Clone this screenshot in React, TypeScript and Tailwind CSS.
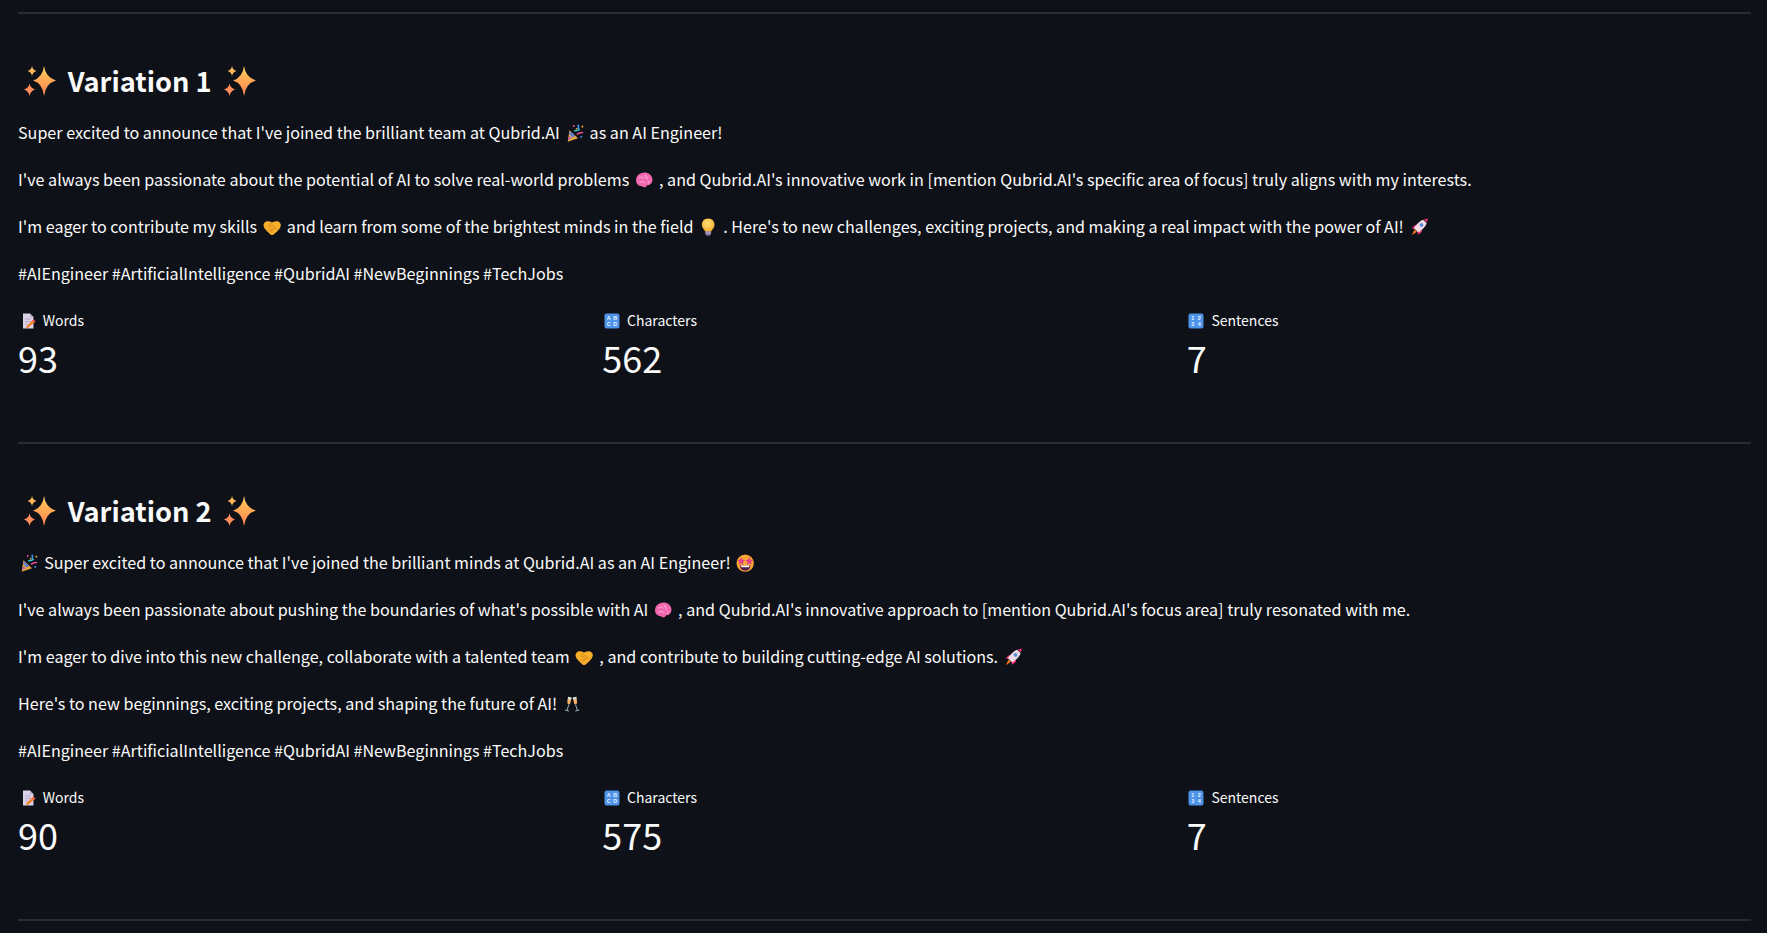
import React from 'react';

// the page uses a different emoji set than the installed one, so they are drawn here
const glyphs: Record<string, React.ReactNode> = {
  sparkles: (
    <>
      <defs>
        <linearGradient id="spark" x1="0" y1="0" x2="0" y2="1">
          <stop offset="0" stopColor="#ffcf5c" />
          <stop offset="1" stopColor="#ff7f50" />
        </linearGradient>
      </defs>
      <path fill="url(#spark)" d="M20 1Q21.5 12.500 32 15.500Q21.500 18.500 20 31Q18.500 18.500 9 15.500Q18.500 12.500 20 1Z" />
      <path fill="#ffb957" d="M8 1Q8.700 5 12.500 6Q8.700 7 8 11Q7.300 7 3.500 6Q7.300 5 8 1Z" />
      <path fill="#ff8d5a" d="M5.500 18.500Q6.300 23 11 24.500Q6.300 26 5.500 31Q4.700 26 0 24.500Q4.700 23 5.500 18.500Z" />
    </>
  ),
  popper: (
    <>
      <path fill="#e8a33d" d="M6 11L21 25L3 31Z" />
      <path fill="#5b7fd6" d="M5 16L8.500 13.500L16 20.700L11 23.500Z" />
      <path fill="#b05cc4" d="M4 24L7 22L10 25L3.500 28Z" />
      <rect x="12" y="2" width="3" height="3" fill="#e94f9c" />
      <rect x="20" y="1" width="3" height="8" rx="1.500" fill="#3e8fe6" />
      <rect x="27" y="3" width="3" height="3" fill="#f2b035" />
      <path stroke="#39c2c9" strokeWidth="2.500" fill="none" d="M14 12Q20 12 24 9" />
      <path stroke="#e94f9c" strokeWidth="2.500" fill="none" d="M19 18Q24 14 30 15" />
      <rect x="25" y="21" width="3" height="3" fill="#3e8fe6" />
      <rect x="17" y="7" width="2.500" height="2.500" fill="#f2b035" />
    </>
  ),
  brain: (
    <>
      <path fill="#f266ae" d="M14 3C20 1 28 5 30 12C32 19 27 25 21 25C20 28 17 30 15 28C12 27 11 26 9 26C4 25 1 20 2 15C2 8 8 4 14 3Z" />
      <path fill="none" stroke="#ffa6d6" strokeWidth="1.800" d="M7 13C10 9 14 10 16 13M17 7C20 9 22 11 21 15M8 20C12 17 16 19 18 21M24 17C25 19 24 21 22 22" />
    </>
  ),
  handshake: (
    <>
      <path fill="#f7ae2b" d="M2 9C5 5 10 5 16 8C22 5 27 5 30 9C33 14 29 19 25 23L18 29C16.500 30 15 30 13.500 29L7 23C3 19 -1 14 2 9Z" />
      <path fill="none" stroke="#d27f12" strokeWidth="1.600" strokeLinecap="round" d="M16 8L11 13C10 15 12 16 14 15L17 13L24 20M20 17L16 22M16 19L13 24M12 19L10 21" />
    </>
  ),
  bulb: (
    <>
      <defs>
        <radialGradient id="bulb" cx="0.45" cy="0.35" r="0.7">
          <stop offset="0" stopColor="#ffe27a" />
          <stop offset="1" stopColor="#f7a825" />
        </radialGradient>
      </defs>
      <path fill="url(#bulb)" d="M16 1C23 1 27 6 27 12C27 17 23 19 21 24H11C9 19 5 17 5 12C5 6 9 1 16 1Z" />
      <rect x="11" y="23" width="10" height="6" rx="1.500" fill="#a493b8" />
      <rect x="13" y="29" width="6" height="2.500" rx="1" fill="#6f6186" />
    </>
  ),
  rocket: (
    <>
      <path fill="#ff7a1f" d="M8 20L12 24L3 30Z" />
      <path fill="#f0357a" d="M8 13L14 11L8 19L3 18Z" />
      <path fill="#f0357a" d="M19 18L21 24L14 29L13 24Z" />
      <path fill="#f2dbe6" d="M23 3L29 9C27 15 20 22 14 25L7 18C10 12 17 5 23 3Z" />
      <path fill="#f0357a" d="M24 2.500L31 1L29.500 8Z" />
      <circle cx="20" cy="12" r="3.200" fill="#4f8fd8" />
    </>
  ),
  face: (
    <>
      <circle cx="16" cy="16" r="15" fill="#f8a533" />
      <path fill="#e23d8e" d="M9 5L11 10L16 10.500L12 13.500L13 19L9 16L5 19L6 13.500L2 10.500L7 10Z" />
      <path fill="#e23d8e" d="M23 5L25 10L30 10.500L26 13.500L27 19L23 16L19 19L20 13.500L16 10.500L21 10Z" />
      <path fill="#54204f" d="M7 20H25C25 26 21 29 16 29C11 29 7 26 7 20Z" />
      <rect x="9" y="20" width="14" height="3" fill="#fff" />
    </>
  ),
  glasses: (
    <>
      <path fill="#f6b26b" d="M9 3L15 5L12.500 15C12 17 9 17 8 15C7 12 8 7 9 3Z" />
      <path fill="#f6b26b" d="M23 3L17 5L19.500 15C20 17 23 17 24 15C25 12 24 7 23 3Z" />
      <path fill="#cfe6f5" d="M9 3L15 5L14 8L8.500 6.500Z" />
      <path fill="#cfe6f5" d="M23 3L17 5L18 8L23.500 6.500Z" />
      <path stroke="#a9c6d8" strokeWidth="1.500" fill="none" d="M10 17L7 27M3.500 26L10.500 28M22 17L25 27M21.500 28L28.500 26" />
    </>
  ),
  memo: (
    <>
      <path fill="#dcd2e8" d="M6 1H20L27 8V31H6Z" />
      <path fill="#b8a9cc" d="M20 1L27 8H20Z" />
      <path stroke="#b8a9cc" strokeWidth="2" d="M10 12H22M10 17H22M10 22H16" />
      <path fill="#f5812f" d="M27 13L31 17L17 29L12 31L14 25Z" />
      <path fill="#e8495a" d="M27 13L31 17L29 19L25 15Z" />
    </>
  ),
  abcd: (
    <>
      <rect x="1" y="1" width="30" height="30" rx="4" fill="#4d93e8" />
      <text x="9.500" y="14" fontSize="11" fontWeight="700" fill="#e8f2ff" textAnchor="middle" fontFamily="Liberation Sans, sans-serif">A</text>
      <text x="22.500" y="14" fontSize="11" fontWeight="700" fill="#e8f2ff" textAnchor="middle" fontFamily="Liberation Sans, sans-serif">B</text>
      <text x="9.500" y="27" fontSize="11" fontWeight="700" fill="#e8f2ff" textAnchor="middle" fontFamily="Liberation Sans, sans-serif">C</text>
      <text x="22.500" y="27" fontSize="11" fontWeight="700" fill="#e8f2ff" textAnchor="middle" fontFamily="Liberation Sans, sans-serif">D</text>
    </>
  ),
  digits: (
    <>
      <rect x="1" y="1" width="30" height="30" rx="4" fill="#4d93e8" />
      <text x="9.500" y="14" fontSize="11" fontWeight="700" fill="#e8f2ff" textAnchor="middle" fontFamily="Liberation Sans, sans-serif">1</text>
      <text x="22.500" y="14" fontSize="11" fontWeight="700" fill="#e8f2ff" textAnchor="middle" fontFamily="Liberation Sans, sans-serif">2</text>
      <text x="9.500" y="27" fontSize="11" fontWeight="700" fill="#e8f2ff" textAnchor="middle" fontFamily="Liberation Sans, sans-serif">3</text>
      <text x="22.500" y="27" fontSize="11" fontWeight="700" fill="#e8f2ff" textAnchor="middle" fontFamily="Liberation Sans, sans-serif">4</text>
    </>
  ),
};

const Emoji = ({ name, large }: { name: string; large?: boolean }) => (
  <span role="img" aria-label={name} className={`inline-flex justify-center align-[-0.2em] ${large ? 'w-[1.6em]' : 'w-[1.4em]'}`}>
    <svg viewBox="0 0 32 32" className={large ? 'w-[1.18em] h-[1.18em]' : 'w-[1.14em] h-[1.14em]'}>{glyphs[name]}</svg>
  </span>
);

const Metric = ({ icon, label, value }: { icon: string; label: string; value: string }) => (
  <div>
    <div className="text-sm leading-[24px] h-[24px]"><Emoji name={icon} /> <span className="ml-[2px]">{label}</span></div>
    <div className="text-[36px] leading-[50px]">{value}</div>
  </div>
);

const Para = ({ children }: { children: React.ReactNode }) => (
  <p className="text-[16.12px] leading-[28px] mb-[19px]">{children}</p>
);

const Heading = ({ title }: { title: string }) => (
  <h2 className="text-[27.2px] font-semibold leading-[40px] mt-[46px] mb-[18px]">
    <Emoji name="sparkles" large /> {title} <Emoji name="sparkles" large />
  </h2>
);

const Metrics = ({ words, chars }: { words: string; chars: string }) => (
  <div className="grid grid-cols-3 gap-[20px] mt-[21px]">
    <Metric icon="memo" label="Words" value={words} />
    <Metric icon="abcd" label="Characters" value={chars} />
    <Metric icon="digits" label="Sentences" value="7" />
  </div>
);

const Rule = ({ className }: { className: string }) => <hr className={`border-0 h-[2px] bg-[#2a2b33] ${className}`} />;

export default function App() {
  return (
    <div className="bg-[#0e1117] text-[#fafafa] pl-[18px] pr-[16px] font-['Noto_Sans_CJK_SC',sans-serif] overflow-hidden h-[933px]">
      <Rule className="mt-[12px]" />
      <section>
        <Heading title="Variation 1" />
        <Para>Super excited to announce that I've joined the brilliant team at Qubrid.AI <Emoji name="popper" /> as an AI Engineer!</Para>
        <Para>I've always been passionate about the potential of AI to solve real-world problems <Emoji name="brain" /> , and Qubrid.AI's innovative work in [mention Qubrid.AI's specific area of focus] truly aligns with my interests.</Para>
        <Para>I'm eager to contribute my skills <Emoji name="handshake" /> and learn from some of the brightest minds in the field <Emoji name="bulb" /> . Here's to new challenges, exciting projects, and making a real impact with the power of AI! <Emoji name="rocket" /></Para>
        <Para>#AIEngineer #ArtificialIntelligence #QubridAI #NewBeginnings #TechJobs</Para>
        <Metrics words="93" chars="562" />
      </section>
      <Rule className="mt-[60px]" />
      <section>
        <Heading title="Variation 2" />
        <Para><Emoji name="popper" /> Super excited to announce that I've joined the brilliant minds at Qubrid.AI as an AI Engineer! <Emoji name="face" /></Para>
        <Para>I've always been passionate about pushing the boundaries of what's possible with AI <Emoji name="brain" /> , and Qubrid.AI's innovative approach to [mention Qubrid.AI's focus area] truly resonated with me.</Para>
        <Para>I'm eager to dive into this new challenge, collaborate with a talented team <Emoji name="handshake" /> , and contribute to building cutting-edge AI solutions. <Emoji name="rocket" /></Para>
        <Para>Here's to new beginnings, exciting projects, and shaping the future of AI! <Emoji name="glasses" /></Para>
        <Para>#AIEngineer #ArtificialIntelligence #QubridAI #NewBeginnings #TechJobs</Para>
        <Metrics words="90" chars="575" />
      </section>
      <Rule className="mt-[60px]" />
    </div>
  );
}
